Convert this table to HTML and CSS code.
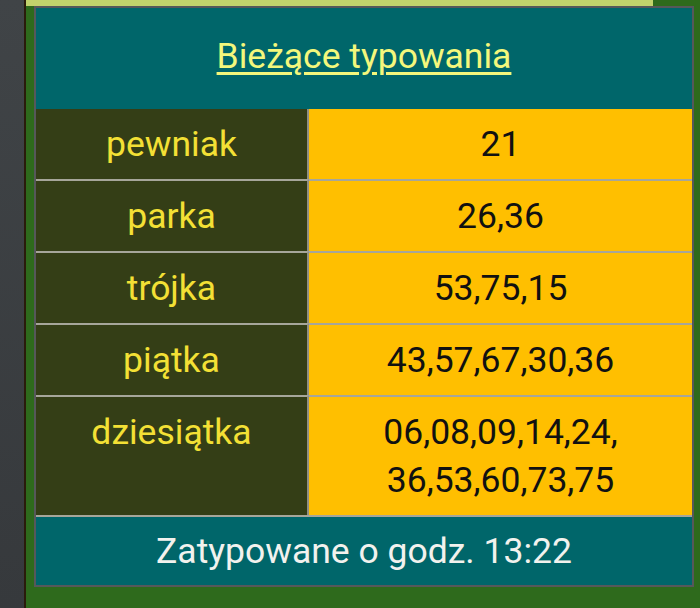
FILE: index.html
```html
<!DOCTYPE html>
<html lang="pl">
<head>
<meta charset="utf-8">
<title>Bieżące typowania</title>
<link rel="stylesheet" href="styles.css">
</head>
<body>
<div class="page">
  <div class="side"></div>
  <div class="main">
    <div class="topbar"></div>
    <div class="content">
      <table class="tips">
        <colgroup>
          <col class="col-label">
          <col class="col-value">
        </colgroup>
        <tr>
          <th class="head" colspan="2"><a href="#">Bieżące typowania</a></th>
        </tr>
        <tr class="first">
          <td class="label">pewniak</td>
          <td class="value">21</td>
        </tr>
        <tr>
          <td class="label">parka</td>
          <td class="value">26,36</td>
        </tr>
        <tr>
          <td class="label">trójka</td>
          <td class="value">53,75,15</td>
        </tr>
        <tr>
          <td class="label">piątka</td>
          <td class="value">43,57,67,30,36</td>
        </tr>
        <tr>
          <td class="label">dziesiątka</td>
          <td class="value">06,08,09,14,24,<br>36,53,60,73,75</td>
        </tr>
        <tr>
          <td class="foot" colspan="2">Zatypowane o godz. 13:22</td>
        </tr>
      </table>
    </div>
  </div>
</div>
</body>
</html>
```

FILE: styles.css
```css
html, body {
  margin: 0;
  padding: 0;
}
body {
  width: 700px;
  height: 608px;
  overflow: hidden;
  background: #2e6a1c;
  font-family: Roboto, "Noto Sans", sans-serif;
}
.page {
  display: flex;
  height: 608px;
}
.side {
  width: 24px;
  flex: none;
  background: linear-gradient(to bottom, #404447, #36393c);
}
.main {
  flex: 1;
  border-left: 2px solid #2a1b0b;
  background: #2e6a1c;
}
.topbar {
  width: 627px;
  height: 6px;
  background: #c2d36c;
}
.content {
  padding-left: 8px;
}
.tips {
  width: 660px;
  table-layout: fixed;
  border: 2px solid #56585a;
  border-spacing: 0;
  border-collapse: separate;
  font-size: 35.5px;
  line-height: 48px;
  text-align: center;
}
.col-label {
  width: 273px;
}
.col-value {
  width: 383px;
}
.head {
  height: 96px;
  padding: 0 0 5px;
  background: #00666a;
  font-weight: 400;
}
.head a {
  color: #f3f77c;
  text-decoration: underline;
  text-decoration-thickness: 3px;
  text-underline-offset: 4px;
}
td {
  padding: 11px 4px;
  border-top: 2px solid #a6a69a;
  vertical-align: top;
}
.first td {
  border-top: none;
}
.label {
  background: #343e16;
  color: #f3e035;
  border-right: 2px solid #8f8f84;
}
.value {
  background: #ffbf00;
  color: #111;
}
.foot {
  height: 48px;
  padding: 10px 0;
  background: #00666a;
  color: #f2f2ee;
  vertical-align: middle;
}
```
